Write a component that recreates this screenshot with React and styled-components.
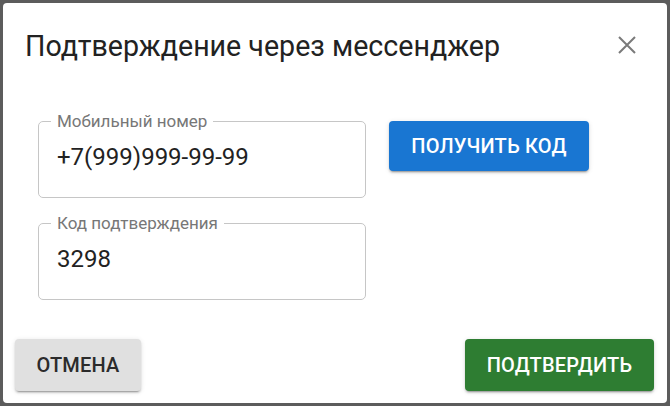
import React from 'react';
import styled, { createGlobalStyle } from 'styled-components';

const GlobalStyle = createGlobalStyle`
  html, body {
    margin: 0;
    padding: 0;
    background: #5c5c5c;
    font-family: Roboto, "Noto Sans", "Liberation Sans", sans-serif;
  }
  * {
    box-sizing: border-box;
  }
`;

const Screen = styled.div`
  width: 670px;
  height: 406px;
  padding: 3px;
`;

const Dialog = styled.div`
  height: 400px;
  background: #fff;
  border-radius: 4px;
  display: flex;
  flex-direction: column;
`;

const Header = styled.div`
  display: flex;
  align-items: center;
  justify-content: space-between;
  padding: 26px 28px 0 22px;
`;

const Title = styled.h2`
  margin: 0;
  font-size: 28.6px;
  line-height: 34px;
  font-weight: 400;
  color: #222;
`;

const CloseButton = styled.button`
  border: none;
  background: none;
  padding: 0;
  width: 24px;
  height: 24px;
  margin-top: -3px;
  display: flex;
  align-items: center;
  justify-content: center;
  cursor: pointer;
`;

const Content = styled.div`
  display: flex;
  align-items: flex-start;
  gap: 23px;
  padding: 48px 0 0 35px;
`;

const Fields = styled.div`
  display: flex;
  flex-direction: column;
  gap: 15px;
  width: 328px;
`;

const Field = styled.fieldset`
  margin: 0;
  padding: 0 18px;
  border: 1px solid #c6c6c6;
  border-radius: 5px;
`;

const Legend = styled.legend`
  margin-left: -6px;
  padding: 0 6px;
  font-size: 17px;
  line-height: 20px;
  color: #777;
`;

const Input = styled.input`
  display: block;
  width: 100%;
  height: 28px;
  margin: 12px 0 26px;
  padding: 0;
  border: none;
  outline: none;
  background: transparent;
  font-family: inherit;
  font-size: 24px;
  line-height: 28px;
  color: #222;
`;

const Button = styled.button`
  height: 52px;
  padding: 0;
  border: none;
  border-radius: 4px;
  background: ${(p) => p.$bg};
  color: ${(p) => p.$fg};
  font-family: inherit;
  font-size: 20px;
  font-weight: 500;
  letter-spacing: 0.2px;
  text-transform: uppercase;
  box-shadow: 0 3px 1px -2px rgba(0, 0, 0, 0.2), 0 2px 2px 0 rgba(0, 0, 0, 0.14),
    0 1px 5px 0 rgba(0, 0, 0, 0.12);
  cursor: pointer;
`;

const SideButton = styled(Button)`
  margin-top: 10px;
  height: 50px;
  width: 200px;
`;

const CancelButton = styled(Button)`
  width: 126px;
`;

const ConfirmButton = styled(Button)`
  width: 189px;
`;

const Actions = styled.div`
  margin-top: auto;
  display: flex;
  justify-content: space-between;
  padding: 0 13px 12px 12px;
`;

const CloseIcon = () => (
  <svg width="20" height="20" viewBox="0 0 20 20">
    <path d="M2 2 L18 18 M18 2 L2 18" stroke="#7a7a7a" strokeWidth="2" fill="none" />
  </svg>
);

const TextField = ({ label, value }) => (
  <Field>
    <Legend>{label}</Legend>
    <Input defaultValue={value} readOnly />
  </Field>
);

const App = () => (
  <>
    <GlobalStyle />
    <Screen>
      <Dialog>
        <Header>
          <Title>Подтверждение через мессенджер</Title>
          <CloseButton aria-label="close">
            <CloseIcon />
          </CloseButton>
        </Header>
        <Content>
          <Fields>
            <TextField label="Мобильный номер" value="+7(999)999-99-99" />
            <TextField label="Код подтверждения" value="3298" />
          </Fields>
          <SideButton $bg="#1976d2" $fg="#fff">
            Получить код
          </SideButton>
        </Content>
        <Actions>
          <CancelButton $bg="#e0e0e0" $fg="#2b2b2b">
            Отмена
          </CancelButton>
          <ConfirmButton $bg="#2e7d32" $fg="#fff">
            Подтвердить
          </ConfirmButton>
        </Actions>
      </Dialog>
    </Screen>
  </>
);

export default App;
